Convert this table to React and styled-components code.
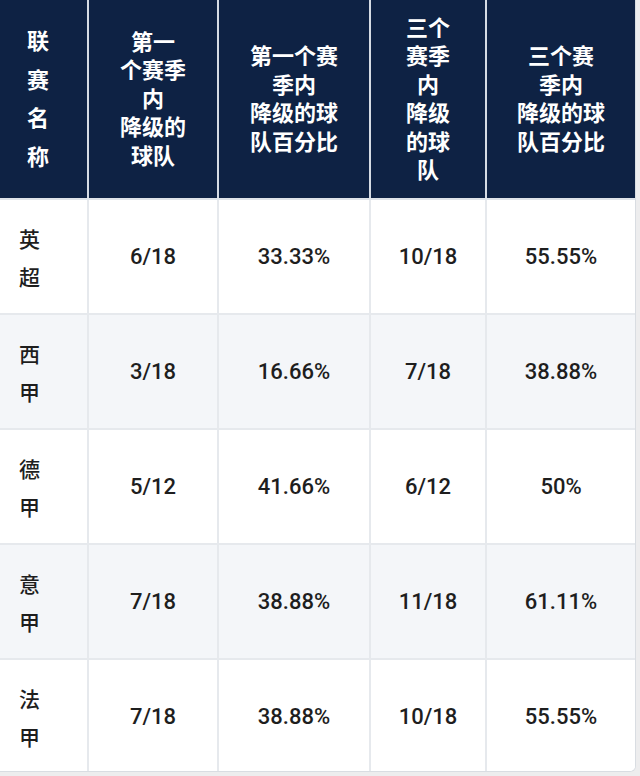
import styled, { createGlobalStyle } from "styled-components";

const GlobalStyle = createGlobalStyle`
  html, body {
    margin: 0;
    padding: 0;
    background: #ededee;
  }
  body {
    font-family: Roboto, "Noto Sans CJK SC", sans-serif;
  }
`;

const Wrapper = styled.div`
  width: 636px;
  height: 772px;
  background: #ffffff;
  border-right: 1px solid #d9dde2;
  border-bottom: 1px solid #d9dde2;
  border-bottom-right-radius: 6px;
  overflow: hidden;
  box-sizing: border-box;
`;

const Table = styled.table`
  width: 635px;
  table-layout: fixed;
  border-collapse: collapse;
`;

const HeadCell = styled.th`
  height: 194px;
  padding: 0;
  background: #0e2244;
  color: #ffffff;
  font-family: "Noto Sans CJK SC", sans-serif;
  font-size: 22px;
  font-weight: 700;
  line-height: ${(p) => (p.$tall ? "38.5px" : "28.5px")};
  text-align: ${(p) => (p.$left ? "left" : "center")};
  padding-left: ${(p) => (p.$left ? "27px" : "0")};
  padding-bottom: 4px;
  border-left: 2px solid #d5dbe4;
  border-bottom: 2px solid #dfe4ea;
  vertical-align: middle;

  &:first-child {
    border-left: none;
  }
`;

const Row = styled.tr`
  background: ${(p) => (p.$alt ? "#f4f6f9" : "#ffffff")};
`;

const Cell = styled.td`
  height: ${(p) => p.$h || 113}px;
  padding: 0;
  color: #1e1e1e;
  font-family: Roboto, "Noto Sans CJK SC", sans-serif;
  font-size: 22px;
  font-weight: 500;
  text-align: center;
  vertical-align: middle;
  border-left: 2px solid #e6e9ed;
  border-top: 2px solid #e6e9ed;

  &:first-child {
    border-left: none;
  }
`;

const NameCell = styled(Cell)`
  text-align: left;
  padding-left: 19px;
  font-family: "Noto Sans CJK SC", sans-serif;
  font-size: 21px;
  line-height: 38px;
`;

const cols = [88, 130, 152, 116, 149];

const rows = [
  ["英", "超", "6/18", "33.33%", "10/18", "55.55%"],
  ["西", "甲", "3/18", "16.66%", "7/18", "38.88%"],
  ["德", "甲", "5/12", "41.66%", "6/12", "50%"],
  ["意", "甲", "7/18", "38.88%", "11/18", "61.11%"],
  ["法", "甲", "7/18", "38.88%", "10/18", "55.55%"],
];

const lines = (arr) =>
  arr.map((t, i) => (
    <span key={i}>
      {t}
      {i < arr.length - 1 && <br />}
    </span>
  ));

export default function App() {
  return (
    <>
      <GlobalStyle />
      <Wrapper>
        <Table>
          <colgroup>
            {cols.map((w, i) => (
              <col key={i} style={{ width: w }} />
            ))}
          </colgroup>
          <thead>
            <tr>
              <HeadCell $left $tall>{lines(["联", "赛", "名", "称"])}</HeadCell>
              <HeadCell>{lines(["第一", "个赛季", "内", "降级的", "球队"])}</HeadCell>
              <HeadCell>{lines(["第一个赛", "季内", "降级的球", "队百分比"])}</HeadCell>
              <HeadCell>{lines(["三个", "赛季", "内", "降级", "的球", "队"])}</HeadCell>
              <HeadCell>{lines(["三个赛", "季内", "降级的球", "队百分比"])}</HeadCell>
            </tr>
          </thead>
          <tbody>
            {rows.map((r, i) => (
              <Row key={i} $alt={i % 2 === 1}>
                <NameCell $h={i === 4 ? 110 : 113}>{lines([r[0], r[1]])}</NameCell>
                <Cell>{r[2]}</Cell>
                <Cell>{r[3]}</Cell>
                <Cell>{r[4]}</Cell>
                <Cell>{r[5]}</Cell>
              </Row>
            ))}
          </tbody>
        </Table>
      </Wrapper>
    </>
  );
}
